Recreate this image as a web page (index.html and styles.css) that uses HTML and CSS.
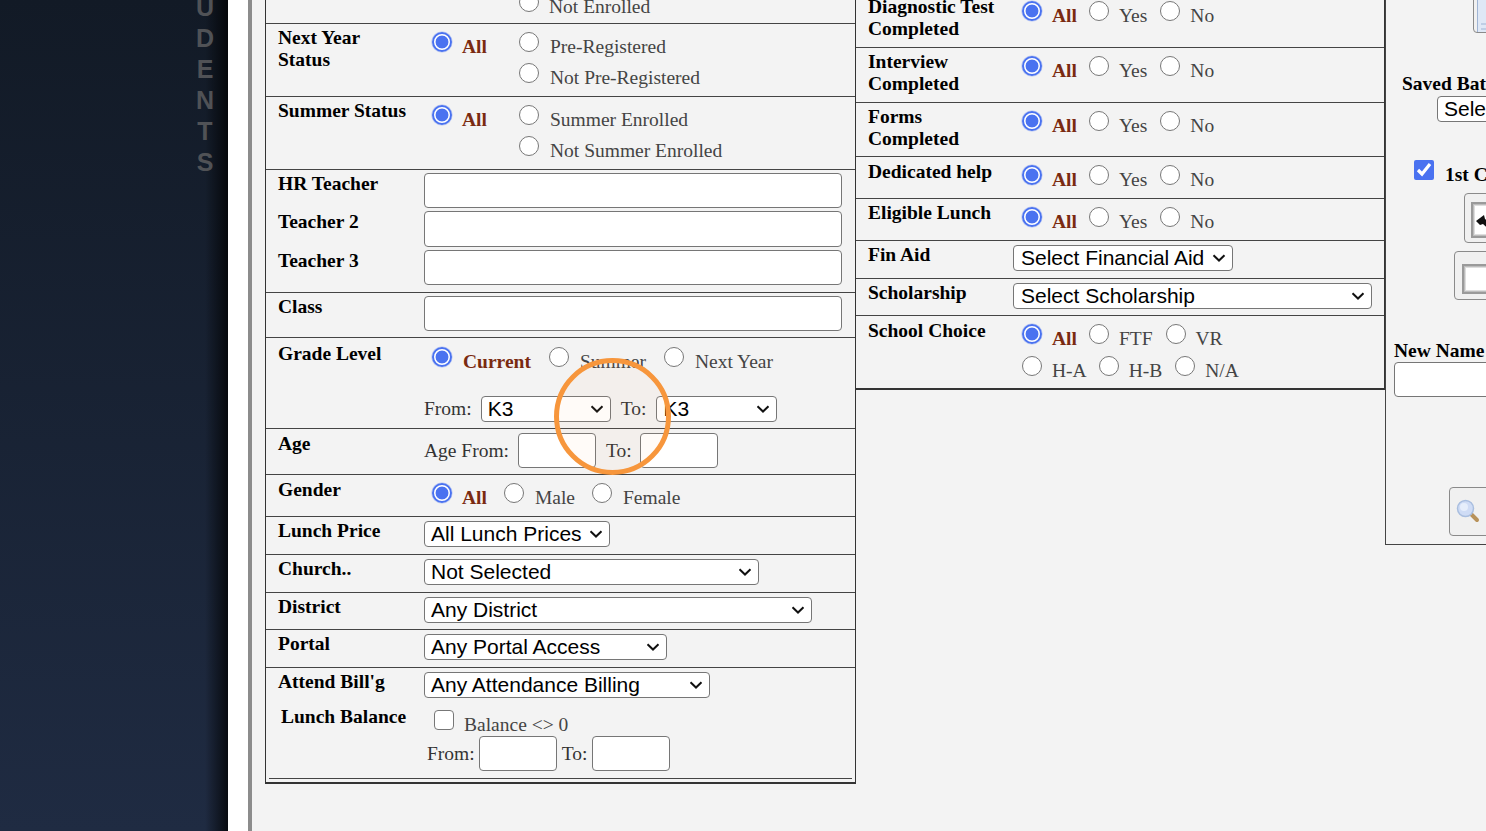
FILE: index.html
```html
<!DOCTYPE html>
<html lang="en">
<head>
<meta charset="utf-8">
<title>Students</title>
<link rel="stylesheet" href="styles.css">
</head>
<body>
<div class="page">
  <aside class="sidebar">
    <div class="side-word"><span>U</span><span>D</span><span>E</span><span>N</span><span>T</span><span>S</span></div>
  </aside>
  <div class="gutter"></div>
  <main class="main">
    <section class="panel panel-left">
      <div class="row h40"><div class="lab"></div><div class="ctl two-col"><div></div><label class="opt"><input type="radio" name="en"><span>Not Enrolled</span></label></div></div>
      <div class="row h73"><div class="lab">Next Year<br>Status</div><div class="ctl two-col">
        <label class="opt"><input type="radio" name="ny" checked><b class="all">All</b></label>
        <div class="stack"><label class="opt"><input type="radio" name="ny"><span>Pre-Registered</span></label><label class="opt"><input type="radio" name="ny"><span>Not Pre-Registered</span></label></div>
      </div></div>
      <div class="row h73"><div class="lab">Summer Status</div><div class="ctl two-col">
        <label class="opt"><input type="radio" name="su" checked><b class="all">All</b></label>
        <div class="stack"><label class="opt"><input type="radio" name="su"><span>Summer Enrolled</span></label><label class="opt"><input type="radio" name="su"><span>Not Summer Enrolled</span></label></div>
      </div></div>
      <div class="row h123 teachers">
        <div class="lab">HR Teacher</div><div class="tcell"><input class="txt wide" type="text"></div>
        <div class="lab">Teacher 2</div><div class="tcell"><input class="txt wide tall" type="text"></div>
        <div class="lab">Teacher 3</div><div class="tcell"><input class="txt wide" type="text"></div>
      </div>
      <div class="row h45"><div class="lab">Class</div><div class="ctl-tight"><input class="txt wide" type="text"></div></div>
      <div class="row h91"><div class="lab lab-low2">Grade Level</div><div class="grade">
        <div class="radios gap-grade">
          <label class="opt"><input type="radio" name="gr" checked><b class="all">Current</b></label>
          <label class="opt"><input type="radio" name="gr"><span>Summer</span></label>
          <label class="opt"><input type="radio" name="gr"><span>Next Year</span></label>
        </div>
        <div class="inline grade-range"><span>From:</span><select class="sel w130"><option>K3</option></select><span class="to-a">To:</span><select class="sel w121"><option>K3</option></select></div>
      </div></div>
      <div class="row h46"><div class="lab lab-low1">Age</div><div class="ctl-tight inline"><span>Age From:</span><input class="txt w78" type="text"><span class="to-b">To:</span><input class="txt w78" type="text"></div></div>
      <div class="row h42"><div class="lab lab-low1">Gender</div><div class="ctl"><div class="radios gap-17">
        <label class="opt"><input type="radio" name="ge" checked><b class="all">All</b></label>
        <label class="opt"><input type="radio" name="ge"><span>Male</span></label>
        <label class="opt"><input type="radio" name="ge"><span>Female</span></label>
      </div></div></div>
      <div class="row h38"><div class="lab">Lunch Price</div><div class="ctl-sel"><select class="sel w186"><option>All Lunch Prices</option></select></div></div>
      <div class="row h38"><div class="lab">Church..</div><div class="ctl-sel"><select class="sel w335"><option>Not Selected</option></select></div></div>
      <div class="row h37"><div class="lab">District</div><div class="ctl-sel"><select class="sel w388"><option>Any District</option></select></div></div>
      <div class="row h38"><div class="lab">Portal</div><div class="ctl-sel"><select class="sel w243"><option>Any Portal Access</option></select></div></div>
      <div class="row h110 attend">
        <div class="lab">Attend Bill'g</div>
        <div class="ctl-sel"><select class="sel w286"><option>Any Attendance Billing</option></select></div>
        <div class="lab lab-lunch">Lunch Balance</div>
        <div class="balance">
          <label class="opt opt-check"><input type="checkbox"><span>Balance &lt;&gt; 0</span></label>
          <div class="inline bal-range"><span>From:</span><input class="txt w78" type="text"><span>To:</span><input class="txt w78" type="text"></div>
        </div>
      </div>
      <div class="panel-foot"></div>
    </section>

    <section class="panel panel-right">
      <div class="row2 h55"><div class="lab">Diagnostic Test<br>Completed</div><div class="ctl"><div class="radios gap-yn">
        <label class="opt"><input type="radio" name="r1" checked><b class="all">All</b></label><label class="opt"><input type="radio" name="r1"><span>Yes</span></label><label class="opt"><input type="radio" name="r1"><span>No</span></label>
      </div></div></div>
      <div class="row2 h55"><div class="lab">Interview<br>Completed</div><div class="ctl"><div class="radios gap-yn">
        <label class="opt"><input type="radio" name="r2" checked><b class="all">All</b></label><label class="opt"><input type="radio" name="r2"><span>Yes</span></label><label class="opt"><input type="radio" name="r2"><span>No</span></label>
      </div></div></div>
      <div class="row2 h54"><div class="lab">Forms<br>Completed</div><div class="ctl"><div class="radios gap-yn">
        <label class="opt"><input type="radio" name="r3" checked><b class="all">All</b></label><label class="opt"><input type="radio" name="r3"><span>Yes</span></label><label class="opt"><input type="radio" name="r3"><span>No</span></label>
      </div></div></div>
      <div class="row2 h42"><div class="lab lab-low1">Dedicated help</div><div class="ctl"><div class="radios gap-yn">
        <label class="opt"><input type="radio" name="r4" checked><b class="all">All</b></label><label class="opt"><input type="radio" name="r4"><span>Yes</span></label><label class="opt"><input type="radio" name="r4"><span>No</span></label>
      </div></div></div>
      <div class="row2 h42"><div class="lab">Eligible Lunch</div><div class="ctl"><div class="radios gap-yn">
        <label class="opt"><input type="radio" name="r5" checked><b class="all">All</b></label><label class="opt"><input type="radio" name="r5"><span>Yes</span></label><label class="opt"><input type="radio" name="r5"><span>No</span></label>
      </div></div></div>
      <div class="row2 h38"><div class="lab">Fin Aid</div><div class="ctl-sel"><select class="sel w220"><option>Select Financial Aid</option></select></div></div>
      <div class="row2 h37"><div class="lab">Scholarship</div><div class="ctl-sel"><select class="sel w359"><option>Select Scholarship</option></select></div></div>
      <div class="row2 h74 last"><div class="lab lab-low1">School Choice</div><div class="ctl choice">
        <div class="radios gap-yn"><label class="opt"><input type="radio" name="r6" checked><b class="all">All</b></label><label class="opt"><input type="radio" name="r6"><span>FTF</span></label><label class="opt"><input type="radio" name="r6"><span>VR</span></label></div>
        <div class="radios gap-yn"><label class="opt"><input type="radio" name="r6"><span>H-A</span></label><label class="opt"><input type="radio" name="r6"><span>H-B</span></label><label class="opt"><input type="radio" name="r6"><span>N/A</span></label></div>
      </div></div>
    </section>

    <section class="panel-tools">
      <button class="imgbtn top-btn" type="button">
        <svg width="40" height="40" viewBox="0 0 40 40"><rect x="0.5" y="0.5" width="30" height="39" fill="#dfe8f6" stroke="#9fb4d4"/><path d="M4 28h20M4 33h20" stroke="#9fb4d4"/></svg>
      </button>
      <div class="tool-label saved">Saved Batch</div>
      <select class="sel saved-sel"><option>Select</option></select>
      <label class="first-check"><input type="checkbox" checked><b>1st Choice</b></label>
      <button class="imgbtn arrow-btn" type="button">
        <svg width="36" height="36" viewBox="0 0 36 36"><rect width="36" height="36" fill="#9a9a9a"/><rect x="2" y="2" width="34" height="32" fill="#bdbdbd"/><rect x="3" y="3" width="33" height="30" fill="#dedede"/><rect x="4" y="4" width="32" height="28" fill="#fff"/><path d="M5 19l8-6 1 4 10 8-4 4-8-7-3 1z" fill="#111"/></svg>
      </button>
      <button class="imgbtn box-btn" type="button">
        <svg width="40" height="30" viewBox="0 0 40 30"><rect width="40" height="30" fill="#9a9a9a"/><rect x="2" y="2" width="38" height="26" fill="#bdbdbd"/><rect x="3" y="3" width="37" height="24" fill="#dedede"/><rect x="4" y="4" width="36" height="22" fill="#fff"/></svg>
      </button>
      <div class="tool-label newname">New Name</div>
      <input class="txt new-input" type="text">
      <button class="imgbtn search-btn" type="button">
        <svg width="24" height="24" viewBox="0 0 24 24"><path d="M14 14l7 7" stroke="#b8925a" stroke-width="4" stroke-linecap="round"/><circle cx="9.5" cy="9.5" r="8" fill="#cfdcf5" stroke="#a9bedf" stroke-width="1.5"/><circle cx="8" cy="8" r="4" fill="#e6eefb"/></svg>
      </button>
    </section>
  </main>
  <div class="ring"></div>
</div>
</body>
</html>
```
FILE: styles.css
```css
* { box-sizing: border-box; }
html, body { margin: 0; height: 100%; overflow: hidden; background: #fff; }
.page {
  position: relative;
  display: flex;
  width: 1486px;
  height: 831px;
  overflow: hidden;
  font: 19.5px/22px "Liberation Serif", "Times New Roman", serif;
  color: #000;
}
.sidebar {
  flex: none;
  width: 228px;
  display: flex;
  justify-content: flex-end;
  background:
    linear-gradient(90deg, rgba(0,0,0,0) 0, rgba(0,0,0,0) 205px, rgba(0,0,0,.75) 228px),
    linear-gradient(180deg, #121a26 0, #1f2b42 100%);
}
.side-word {
  display: flex;
  flex-direction: column;
  align-items: center;
  width: 20px;
  margin: -8px 13px 0 0;
  font: bold 25px/31px "Liberation Sans", Arial, sans-serif;
  color: #505256;
}
.gutter { flex: none; width: 24px; background: #fff; border-right: 4px solid #8c8c8c; }
.main {
  flex: 1;
  display: flex;
  align-items: flex-start;
  min-width: 0;
  padding-left: 13px;
  background: #f3f3f3;
}
.panel { flex: none; }
.panel-left {
  width: 591px;
  margin-top: -16px;
  border-left: 1px solid #333;
  border-right: 1px solid #333;
  border-bottom: 2px solid #333;
}
.panel-right {
  width: 530px;
  margin-top: -7px;
  border-right: 2px solid #333;
}
.row, .row2 {
  display: grid;
  align-content: start;
  border-bottom: 1px solid #444;
}
.row { grid-template-columns: 158px 1fr; }
.row2 { grid-template-columns: 157px 1fr; }
.row2.last { border-bottom: 2px solid #333; }
.h37 { height: 37px; } .h38 { height: 38px; } .h40 { height: 40px; }
.h42 { height: 42px; } .h45 { height: 45px; } .h46 { height: 46px; }
.h54 { height: 54px; } .h55 { height: 55px; } .h73 { height: 73px; }
.h74 { height: 74px; } .h91 { height: 91px; } .h110 { height: 110px; }
.h123 { height: 123px; }

.lab { padding: 3px 0 0 12px; font-weight: bold; white-space: nowrap; }
.lab-low1 { padding-top: 4px; }
.lab-low2 { padding-top: 5px; }
.ctl { padding: 8px 0 0 8px; }
.row2 .ctl { padding-left: 9px; }
.ctl-tight { padding-top: 3px; }
.ctl-sel { padding-top: 4px; }
.two-col { display: grid; grid-template-columns: 87px 1fr; }
.stack { display: flex; flex-direction: column; }
.radios { display: flex; }
.gap-17 { gap: 17px; }
.gap-yn { gap: 13px; }
.gap-yn .opt:first-child { margin-right: -1px; }
.gap-grade { gap: 18px; padding-left: 8px; }
.opt { display: flex; align-items: flex-start; gap: 10px; height: 31px; color: #444; white-space: nowrap; }
.opt span, .opt .all { margin-top: 4px; }
.stack span, .gap-17 span, .gap-grade span, .gap-grade b { margin-left: 1px; }
.all { color: #7a2a10; }
input[type="radio"], input[type="checkbox"] {
  width: 20px;
  height: 20px;
  margin: 0;
  flex: none;
  accent-color: #4a72f0;
}
input[type="radio"] {
  appearance: none;
  -webkit-appearance: none;
  background: #fff;
  border: 1.6px solid #777;
  border-radius: 50%;
}
input[type="radio"]:checked {
  border: 2px solid #4a72f0;
  background: radial-gradient(circle, #4a72f0 0, #4a72f0 6px, #fff 6.8px);
  box-shadow: 0 0 0 .6px rgba(74, 114, 240, .35);
}
input[type="checkbox"]:not(:checked) {
  appearance: none;
  -webkit-appearance: none;
  background: #fff;
  border: 1.6px solid #777;
  border-radius: 4px;
}
.txt {
  display: block;
  height: 35px;
  background: #fff;
  border: 1px solid #767676;
  border-radius: 4px;
  padding: 0 4px;
}
.wide { width: 418px; }
.tall { height: 36px; }
.w78 { width: 78px; }
.teachers { grid-template-rows: 38px 39px 39px; padding-top: 3px; }
.teachers .lab { padding-top: 0; }
.grade { padding-top: 9px; }
.grade-range { margin-top: 18px; }
.inline { display: flex; align-items: center; white-space: nowrap; color: #333; }
.grade-range span:first-child { margin-right: 9px; }
.to-a { margin: 0 10px; }
.to-b { margin: 0 8px 0 10px; }
.ctl-tight.inline { padding-top: 4px; }
.ctl-tight.inline span:first-child { margin-right: 9px; }
.sel {
  display: block;
  height: 26px;
  appearance: none;
  -webkit-appearance: none;
  background: #fff url("data:image/svg+xml,%3Csvg xmlns='http://www.w3.org/2000/svg' width='14' height='8' viewBox='0 0 14 8'%3E%3Cpath d='M1.5 1.2L7 6.5l5.5-5.3' fill='none' stroke='%23111' stroke-width='2'/%3E%3C/svg%3E") no-repeat right 6px center;
  border: 1px solid #767676;
  border-radius: 4px;
  padding: 0 22px 0 6px;
  font: 21px/24px "Liberation Sans", Arial, sans-serif;
  color: #000;
}
.row2 .sel { padding-left: 7px; }
.w121 { width: 121px; } .w130 { width: 130px; } .w186 { width: 186px; }
.w220 { width: 220px; } .w243 { width: 243px; } .w286 { width: 286px; }
.w335 { width: 335px; } .w359 { width: 359px; } .w388 { width: 388px; }
.attend { border-bottom: 0; }
.lab-lunch { padding: 8px 0 0 15px; }
.balance { padding: 12px 0 0 3px; }
.opt-check { padding-left: 7px; height: 26px; }
.bal-range { gap: 5px; }
.bal-range span:first-child { margin-right: -1px; }
.panel-foot { height: 4px; margin: 0 3px; border-top: 1px solid #444; }

.choice .radios { height: 32px; }

.panel-tools {
  flex: none;
  width: 400px;
  height: 545px;
  margin-left: -1px;
  border-left: 1px solid #444;
  border-bottom: 1px solid #444;
}
.imgbtn {
  display: block;
  padding: 0;
  background: #f0f0f0;
  border: 1px solid #8a8a8a;
  border-radius: 4px;
  overflow: hidden;
}
.top-btn { width: 60px; height: 41px; margin: -8px 0 0 87px; padding: 3px 0 0 3px; text-align: left; }
.tool-label { font-weight: bold; white-space: nowrap; }
.saved { margin: 40px 0 0 16px; }
.saved-sel { width: 120px; margin: 1px 0 0 51px; }
.first-check { display: flex; align-items: flex-start; gap: 11px; margin: 38px 0 0 28px; white-space: nowrap; }
.first-check b { margin-top: 4px; }
.arrow-btn { width: 60px; height: 50px; margin: 7px 0 0 78px; padding: 6px 0 0 6px; text-align: left; }
.box-btn { width: 60px; height: 49px; margin: 8px 0 0 68px; padding: 10px 0 0 7px; text-align: left; }
.newname { margin: 40px 0 0 8px; }
.new-input { width: 200px; margin: 0 0 0 8px; }
.search-btn { width: 60px; height: 49px; margin: 90px 0 0 63px; padding: 2px 0 0 6px; text-align: left; }

.ring {
  position: absolute;
  left: 554px;
  top: 358px;
  width: 117px;
  height: 117px;
  border: 5px solid #f7963c;
  border-radius: 50%;
  background: rgba(255, 170, 110, .05);
}
```
